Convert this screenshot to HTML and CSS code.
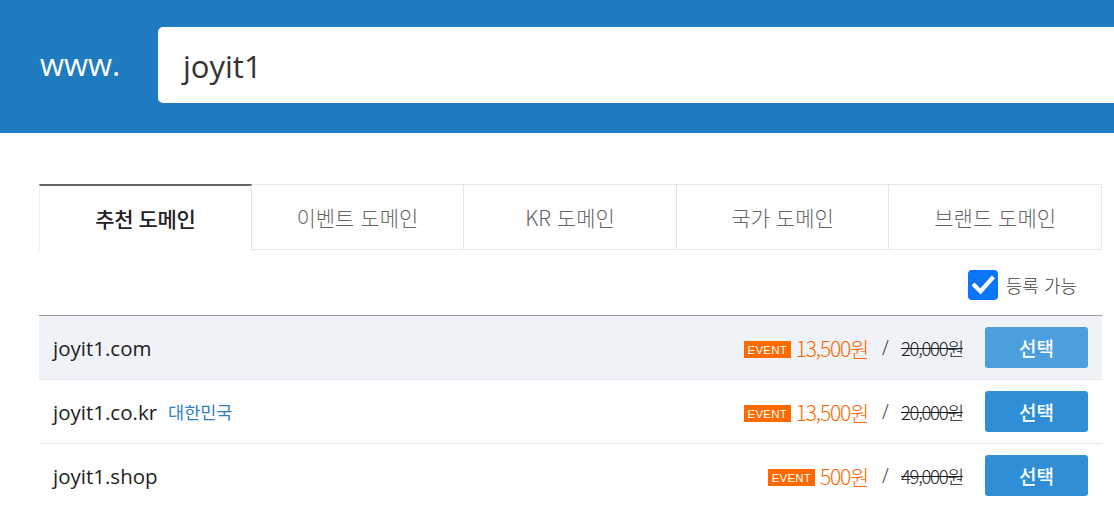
FILE: index.html
```html
<!DOCTYPE html>
<html lang="ko">
  <head>
    <meta charset="UTF-8" />
    <title>도메인 검색</title>
    <link rel="stylesheet" href="styles.css">
  </head>
  <body>
    <!-- 검색 헤더 -->
    <div class="search-bar">
      <span class="www">www.</span>
      <div class="search-input">joyit1</div>
    </div>

    <div class="content">
      <!-- 탭 -->
      <ul class="tabs">
        <li class="on">추천 도메인</li>
        <li>이벤트 도메인</li>
        <li>KR 도메인</li>
        <li>국가 도메인</li>
        <li>브랜드 도메인</li>
      </ul>

      <!-- 필터 -->
      <div class="filter">
        <span class="check">
          <svg width="30" height="30" viewBox="0 0 30 30">
            <rect width="30" height="30" rx="4" fill="#0a75f5"/>
            <path d="M6.5 15.5 L12.5 21.5 L24 8.5" fill="none" stroke="#fff" stroke-width="4.2" stroke-linecap="square"/>
          </svg>
        </span>
        <span class="check-label">등록 가능</span>
      </div>

      <!-- 결과 리스트 -->
      <ul class="result">
        <li class="hover">
          <span class="name">joyit1.com</span>
          <span class="badge">EVENT</span>
          <span class="price">13,500원</span>
          <span class="slash">/</span>
          <span class="old">20,000원</span>
          <a class="btn" href="javascript:;">선택</a>
        </li>
        <li>
          <span class="name">joyit1.co.kr</span>
          <span class="country">대한민국</span>
          <span class="badge">EVENT</span>
          <span class="price">13,500원</span>
          <span class="slash">/</span>
          <span class="old">20,000원</span>
          <a class="btn" href="javascript:;">선택</a>
        </li>
        <li>
          <span class="name">joyit1.shop</span>
          <span class="badge">EVENT</span>
          <span class="price">500원</span>
          <span class="slash">/</span>
          <span class="old">49,000원</span>
          <a class="btn" href="javascript:;">선택</a>
        </li>
      </ul>
    </div>
  </body>
</html>
```

FILE: styles.css
```css
* {
  margin: 0;
  padding: 0;
}

body {
  font-family: "Open Sans", "Noto Sans CJK KR", sans-serif;
  color: #222;
  background: #fff;
  overflow: hidden;
}

ul {
  list-style: none;
}

/* 상단 검색 */
.search-bar {
  height: 133px;
  box-sizing: border-box;
  padding-top: 27px;
  background-color: #1e7bbf;
  display: flex;
  align-items: flex-start;
}

.www {
  width: 118px;
  padding-left: 40px;
  color: #fff;
  font-size: 31px;
  line-height: 74px;
}

.search-input {
  flex: 1;
  height: 76px;
  background: #fff;
  border-radius: 5px 0 0 5px;
  padding-left: 25px;
  font-size: 31px;
  line-height: 78px;
  color: #333;
}

.content {
  width: 1063px;
  margin-left: 39px;
  padding-top: 51px;
}

/* 탭 */
.tabs {
  display: grid;
  grid-template-columns: repeat(5, 1fr);
  height: 66px;
}

.tabs li {
  display: flex;
  align-items: center;
  justify-content: center;
  border: 1px solid #e6e6e6;
  border-left: none;
  font-family: "Noto Sans CJK KR", sans-serif;
  font-size: 21px;
  font-weight: 300;
  color: #666;
}

.tabs li.on {
  border-top: 2px solid #666;
  border-left: 1px solid #eee;
  border-bottom: none;
  color: #222;
  font-weight: 500;
  letter-spacing: -0.4px;
}

/* 필터 */
.filter {
  display: flex;
  justify-content: flex-end;
  align-items: center;
  height: 30px;
  padding: 20px 25px 15px 0;
}

.check {
  width: 30px;
  height: 30px;
  margin-right: 8px;
}

.check svg {
  display: block;
}

.check-label {
  font-family: "Noto Sans CJK KR", sans-serif;
  font-size: 18px;
  font-weight: 300;
  color: #444;
}

/* 리스트 */
.result {
  border-top: 1px solid #999;
}

.result li {
  height: 63px;
  border-bottom: 1px solid #e6e6e6;
  display: flex;
  align-items: center;
  padding: 0 14px 0 14px;
}

.result li.hover {
  background-color: #eff2f7;
}

.name {
  font-size: 20.5px;
  color: #222;
}

.country {
  margin-left: 11px;
  font-family: "Noto Sans CJK KR", sans-serif;
  font-size: 17.5px;
  color: #2f7fc6;
}

.badge {
  margin-left: auto;
  margin-top: 4px;
  width: 47px;
  height: 17px;
  display: flex;
  align-items: center;
  justify-content: center;
  background-color: #ff6a00;
  color: #fff;
  font-family: "Liberation Sans", sans-serif;
  font-size: 11.5px;
  letter-spacing: 0.2px;
}

.price {
  margin-left: 5px;
  font-family: "Noto Sans CJK KR", sans-serif;
  font-size: 21px;
  font-weight: 300;
  color: #ff6600;
  letter-spacing: -1.2px;
}

.slash {
  margin: 0 12px 0 14px;
  font-size: 20px;
  color: #333;
  font-weight: 300;
}

.old {
  font-family: "Noto Sans CJK KR", sans-serif;
  font-size: 18.5px;
  font-weight: 300;
  color: #222;
  letter-spacing: -1.3px;
  text-decoration: line-through;
}

.btn {
  margin-left: 22px;
  width: 103px;
  height: 41px;
  line-height: 41px;
  text-align: center;
  border-radius: 3px;
  background-color: #2f8fd6;
  color: #fff;
  text-decoration: none;
  font-family: "Noto Sans CJK KR", sans-serif;
  font-size: 19px;
  font-weight: 500;
}

.result li.hover .btn {
  background-color: #4a9fdc;
}
```
